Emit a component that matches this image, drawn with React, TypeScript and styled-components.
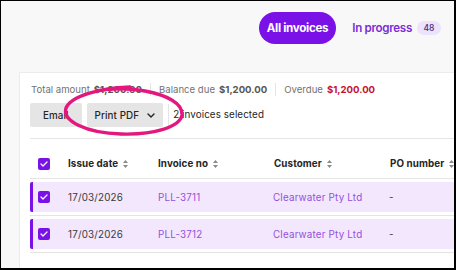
import * as React from 'react';
import styled, { createGlobalStyle } from 'styled-components';

const colors = {
	page: '#f8f8f9',
	purple: '#7a12e8',
	purpleText: '#7b2ed6',
	link: '#9450dc',
	rowBg: '#f3e7fd',
	badgeBg: '#ebe2fb',
	grey: '#727272',
	greyDark: '#555555',
	text: '#262626',
	line: '#e4e4e4',
	red: '#c8102e',
	button: '#e5e5e5',
	annotation: '#e3177e',
};

const GlobalStyle = createGlobalStyle`
	html, body {
		margin: 0;
		padding: 0;
		background: #000;
	}
	body {
		font-family: Inter, "Noto Sans", sans-serif;
		-webkit-font-smoothing: antialiased;
	}
`;

const Frame = styled.div`
	position: relative;
	width: 453px;
	height: 267px;
	margin: 1px 2px 2px 1px;
	background: ${colors.page};
	overflow: hidden;
`;

const TabBar = styled.div`
	display: flex;
	justify-content: flex-end;
	align-items: center;
	gap: 16px;
	height: 32px;
	padding: 11px 13px 0 0;
`;

const Tab = styled.div<{ active?: boolean }>`
	display: flex;
	align-items: center;
	gap: 5px;
	height: 32px;
	padding: 0 ${p => (p.active ? '8px' : '0')};
	border-radius: 16px;
	background: ${p => (p.active ? colors.purple : 'transparent')};
	color: ${p => (p.active ? '#fff' : colors.purpleText)};
	font-size: 11.6px;
	font-weight: ${p => (p.active ? 700 : 600)};
	letter-spacing: -0.3px;
`;

const Badge = styled.span`
	display: inline-flex;
	align-items: center;
	justify-content: center;
	width: 24px;
	height: 14px;
	border-radius: 7px;
	background: ${colors.badgeBg};
	color: #4b2a7a;
	font-size: 8.5px;
	font-weight: 500;
	letter-spacing: 0;
`;

const Card = styled.div`
	margin: 28px 0 0 18px;
	width: 460px;
	height: 220px;
	background: #fff;
	border: 1px solid #ececec;
	padding: 9px 0 0 10px;
	box-sizing: border-box;
`;

const Summary = styled.div`
	display: flex;
	align-items: center;
	height: 14px;
	font-size: 9.6px;
	color: ${colors.grey};
	padding-left: 1px;
`;

const SummaryItem = styled.span`
	display: flex;
	gap: 4px;
	padding: 0 8px;
	border-left: 1px solid ${colors.line};
	line-height: 13px;

	&:first-child {
		padding-left: 0;
		border-left: none;
	}
`;

const Amount = styled.b<{ overdue?: boolean }>`
	font-weight: 700;
	color: ${p => (p.overdue ? colors.red : colors.greyDark)};
`;

const Toolbar = styled.div`
	display: flex;
	align-items: center;
	gap: 5px;
	margin-top: 7px;
	padding-bottom: 11px;
	border-bottom: 1px solid ${colors.line};
	width: 430px;
`;

const Button = styled.button<{ menu?: boolean }>`
	display: flex;
	align-items: center;
	gap: 8px;
	height: 24px;
	padding: 0 ${p => (p.menu ? '8px' : '13px')};
	border: none;
	border-radius: 2px;
	background: ${colors.button};
	color: ${colors.text};
	font-family: inherit;
	font-size: 9.8px;
	font-weight: 500;
	letter-spacing: 0.1px;
`;

const Selected = styled.span`
	font-size: 9.8px;
	color: ${colors.text};
	padding-left: 4px;
	border-left: 1px solid ${colors.line};
	line-height: 22px;
	letter-spacing: 0.1px;
`;

const Table = styled.div`
	width: 430px;
`;

const HeaderRow = styled.div`
	display: grid;
	grid-template-columns: 38px 90px 116px 116px 1fr;
	height: 40px;
	align-items: end;
	padding-bottom: 8px;
	box-sizing: border-box;
	border-bottom: 1px solid ${colors.line};
	font-size: 9.8px;
	font-weight: 700;
	color: ${colors.text};
	line-height: 12px;
	letter-spacing: 0.1px;
`;

const HeadCell = styled.span`
	display: flex;
	align-items: center;
	gap: 5px;
`;

const RowWrap = styled.div`
	padding: 3px 0;
	border-bottom: 1px solid ${colors.line};
`;

const DataRow = styled.div`
	display: grid;
	grid-template-columns: 35px 90px 115px 116px 1fr;
	align-items: center;
	height: 30px;
	background: ${colors.rowBg};
	border-left: 3px solid ${colors.purple};
	border-radius: 2px 0 0 2px;
	font-size: 9.8px;
	color: #3a3a3a;
	letter-spacing: 0.2px;
`;

const Cell = styled.span<{ link?: boolean }>`
	color: ${p => (p.link ? colors.link : 'inherit')};
`;

const CheckCell = styled.span<{ inset?: number }>`
	display: flex;
	padding-left: ${p => p.inset ?? 8}px;
`;

const CheckBox = styled.span`
	display: flex;
	align-items: center;
	justify-content: center;
	width: 12px;
	height: 12px;
	border-radius: 2px;
	background: ${colors.purple};
`;

const Annotation = styled.svg`
	position: absolute;
	left: 0;
	top: 0;
	pointer-events: none;
`;

const Check = () => (
	<CheckBox>
		<svg width="8" height="6" viewBox="0 0 8 6">
			<path d="M1 3l2 2 4-4" fill="none" stroke="#fff" strokeWidth="1.2" strokeLinecap="round" strokeLinejoin="round" />
		</svg>
	</CheckBox>
);

const Sort = () => (
	<svg width="5" height="8" viewBox="0 0 5 8">
		<path d="M2.5 0L5 3H0z M2.5 8L0 5h5z" fill="#8a8a8a" />
	</svg>
);

const Chevron = () => (
	<svg width="8" height="5" viewBox="0 0 8 5">
		<path d="M1 1l3 3 3-3" fill="none" stroke="#222" strokeWidth="1.4" strokeLinecap="round" strokeLinejoin="round" />
	</svg>
);

const invoices = [
	{ id: 'PLL-3711', date: '17/03/2026', customer: 'Clearwater Pty Ltd', po: '-' },
	{ id: 'PLL-3712', date: '17/03/2026', customer: 'Clearwater Pty Ltd', po: '-' },
];

const headers = ['Issue date', 'Invoice no', 'Customer', 'PO number'];

export default function App() {
	return (
		<>
			<GlobalStyle />
			<Frame>
				<TabBar>
					<Tab active>All invoices</Tab>
					<Tab>
						In progress <Badge>48</Badge>
					</Tab>
				</TabBar>
				<Card>
					<Summary>
						<SummaryItem>
							Total amount <Amount>$1,200.00</Amount>
						</SummaryItem>
						<SummaryItem>
							Balance due <Amount>$1,200.00</Amount>
						</SummaryItem>
						<SummaryItem>
							Overdue <Amount overdue>$1,200.00</Amount>
						</SummaryItem>
					</Summary>
					<Toolbar>
						<Button>Email</Button>
						<Button menu>
							Print PDF
							<Chevron />
						</Button>
						<Selected>2 invoices selected</Selected>
					</Toolbar>
					<Table>
						<HeaderRow>
							<CheckCell>
								<Check />
							</CheckCell>
							{headers.map(h => (
								<HeadCell key={h}>
									{h}
									<Sort />
								</HeadCell>
							))}
						</HeaderRow>
						{invoices.map(inv => (
							<RowWrap key={inv.id}>
								<DataRow>
									<CheckCell inset={5}>
										<Check />
									</CheckCell>
									<Cell>{inv.date}</Cell>
									<Cell link>{inv.id}</Cell>
									<Cell link>{inv.customer}</Cell>
									<Cell>{inv.po}</Cell>
								</DataRow>
							</RowWrap>
						))}
					</Table>
				</Card>
				<Annotation width="453" height="267" viewBox="1 1 453 267">
					<path
						d="M130 87 C100 88, 71 96, 66 108 C62 121, 86 133, 121 134 C154 135, 180 127, 182 115 C183 103, 166 95, 145 91 C128 88, 112 88, 96 91"
						fill="none"
						stroke={colors.annotation}
						strokeWidth="3.4"
						strokeLinecap="round"
					/>
				</Annotation>
			</Frame>
		</>
	);
}
